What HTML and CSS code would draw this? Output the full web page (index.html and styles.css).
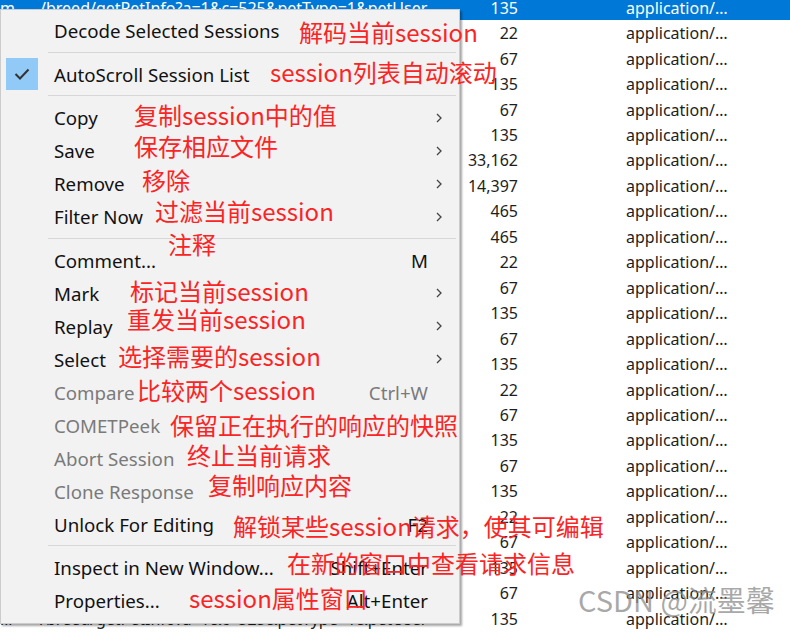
FILE: index.html
```html
<!DOCTYPE html>
<html lang="zh">
<head>
<meta charset="utf-8">
<title>Fiddler session menu</title>
<link rel="stylesheet" href="styles.css">
</head>
<body>
<div class="screen">
  <div class="list">
    <div class="row sel"><span class="host">m</span><span class="url">/breed/getPetInfo?a=1&amp;c=525&amp;petType=1&amp;petUser</span><span class="num">135</span><span></span><span class="type">application/…</span></div>
    <div class="row"><span></span><span></span><span class="num">22</span><span></span><span class="type">application/…</span></div>
    <div class="row"><span></span><span></span><span class="num">67</span><span></span><span class="type">application/…</span></div>
    <div class="row"><span></span><span></span><span class="num">135</span><span></span><span class="type">application/…</span></div>
    <div class="row"><span></span><span></span><span class="num">67</span><span></span><span class="type">application/…</span></div>
    <div class="row"><span></span><span></span><span class="num">135</span><span></span><span class="type">application/…</span></div>
    <div class="row"><span></span><span></span><span class="num">33,162</span><span></span><span class="type">application/…</span></div>
    <div class="row"><span></span><span></span><span class="num">14,397</span><span></span><span class="type">application/…</span></div>
    <div class="row"><span></span><span></span><span class="num">465</span><span></span><span class="type">application/…</span></div>
    <div class="row"><span></span><span></span><span class="num">465</span><span></span><span class="type">application/…</span></div>
    <div class="row"><span></span><span></span><span class="num">22</span><span></span><span class="type">application/…</span></div>
    <div class="row"><span></span><span></span><span class="num">67</span><span></span><span class="type">application/…</span></div>
    <div class="row"><span></span><span></span><span class="num">135</span><span></span><span class="type">application/…</span></div>
    <div class="row"><span></span><span></span><span class="num">67</span><span></span><span class="type">application/…</span></div>
    <div class="row"><span></span><span></span><span class="num">135</span><span></span><span class="type">application/…</span></div>
    <div class="row"><span></span><span></span><span class="num">22</span><span></span><span class="type">application/…</span></div>
    <div class="row"><span></span><span></span><span class="num">67</span><span></span><span class="type">application/…</span></div>
    <div class="row"><span></span><span></span><span class="num">135</span><span></span><span class="type">application/…</span></div>
    <div class="row"><span></span><span></span><span class="num">67</span><span></span><span class="type">application/…</span></div>
    <div class="row"><span></span><span></span><span class="num">135</span><span></span><span class="type">application/…</span></div>
    <div class="row"><span></span><span></span><span class="num">22</span><span></span><span class="type">application/…</span></div>
    <div class="row"><span></span><span></span><span class="num">67</span><span></span><span class="type">application/…</span></div>
    <div class="row"><span></span><span></span><span class="num">135</span><span></span><span class="type">application/…</span></div>
    <div class="row"><span></span><span></span><span class="num">67</span><span></span><span class="type">application/…</span></div>
    <div class="row"><span class="host">lll</span><span class="url">/breed/getPetInfo?a=1&amp;c=525&amp;petType=1&amp;petUser</span><span class="num">135</span><span></span><span class="type">application/…</span></div>
  </div>

  <div class="menu">
    <div class="item"><span class="gutter"></span><span class="label">Decode Selected Sessions</span><span class="key"></span><span class="sub"></span></div>
    <div class="sep"></div>
    <div class="item"><span class="gutter"><span class="check"><svg width="16" height="12" viewBox="0 0 16 12"><polyline points="1.5,6 6,10.5 14.5,1.5" fill="none" stroke="#333" stroke-width="2"/></svg></span></span><span class="label">AutoScroll Session List</span><span class="key"></span><span class="sub"></span></div>
    <div class="sep"></div>
    <div class="item"><span class="gutter"></span><span class="label">Copy</span><span class="key"></span><span class="sub"><svg class="arrow" width="6" height="10" viewBox="0 0 6 10"><polyline points="1,1 5,5 1,9" fill="none" stroke="#444" stroke-width="1.3"/></svg></span></div>
    <div class="item"><span class="gutter"></span><span class="label">Save</span><span class="key"></span><span class="sub"><svg class="arrow" width="6" height="10" viewBox="0 0 6 10"><polyline points="1,1 5,5 1,9" fill="none" stroke="#444" stroke-width="1.3"/></svg></span></div>
    <div class="item"><span class="gutter"></span><span class="label">Remove</span><span class="key"></span><span class="sub"><svg class="arrow" width="6" height="10" viewBox="0 0 6 10"><polyline points="1,1 5,5 1,9" fill="none" stroke="#444" stroke-width="1.3"/></svg></span></div>
    <div class="item"><span class="gutter"></span><span class="label">Filter Now</span><span class="key"></span><span class="sub"><svg class="arrow" width="6" height="10" viewBox="0 0 6 10"><polyline points="1,1 5,5 1,9" fill="none" stroke="#444" stroke-width="1.3"/></svg></span></div>
    <div class="sep"></div>
    <div class="item"><span class="gutter"></span><span class="label">Comment...</span><span class="key">M</span><span class="sub"></span></div>
    <div class="item"><span class="gutter"></span><span class="label">Mark</span><span class="key"></span><span class="sub"><svg class="arrow" width="6" height="10" viewBox="0 0 6 10"><polyline points="1,1 5,5 1,9" fill="none" stroke="#444" stroke-width="1.3"/></svg></span></div>
    <div class="item"><span class="gutter"></span><span class="label">Replay</span><span class="key"></span><span class="sub"><svg class="arrow" width="6" height="10" viewBox="0 0 6 10"><polyline points="1,1 5,5 1,9" fill="none" stroke="#444" stroke-width="1.3"/></svg></span></div>
    <div class="item"><span class="gutter"></span><span class="label">Select</span><span class="key"></span><span class="sub"><svg class="arrow" width="6" height="10" viewBox="0 0 6 10"><polyline points="1,1 5,5 1,9" fill="none" stroke="#444" stroke-width="1.3"/></svg></span></div>
    <div class="item disabled"><span class="gutter"></span><span class="label">Compare</span><span class="key">Ctrl+W</span><span class="sub"></span></div>
    <div class="item disabled"><span class="gutter"></span><span class="label">COMETPeek</span><span class="key"></span><span class="sub"></span></div>
    <div class="item disabled"><span class="gutter"></span><span class="label">Abort Session</span><span class="key"></span><span class="sub"></span></div>
    <div class="item disabled"><span class="gutter"></span><span class="label">Clone Response</span><span class="key"></span><span class="sub"></span></div>
    <div class="item"><span class="gutter"></span><span class="label">Unlock For Editing</span><span class="key">F2</span><span class="sub"></span></div>
    <div class="sep"></div>
    <div class="item"><span class="gutter"></span><span class="label">Inspect in New Window...</span><span class="key">Shift+Enter</span><span class="sub"></span></div>
    <div class="item"><span class="gutter"></span><span class="label">Properties...</span><span class="key">Alt+Enter</span><span class="sub"></span></div>
  </div>

  <div class="notes">
    <span class="note n1">解码当前session</span>
    <span class="note n2">session列表自动滚动</span>
    <span class="note n3">复制session中的值</span>
    <span class="note n4">保存相应文件</span>
    <span class="note n5">移除</span>
    <span class="note n6">过滤当前session</span>
    <span class="note n7">注释</span>
    <span class="note n8">标记当前session</span>
    <span class="note n9">重发当前session</span>
    <span class="note n10">选择需要的session</span>
    <span class="note n11">比较两个session</span>
    <span class="note n12">保留正在执行的响应的快照</span>
    <span class="note n13">终止当前请求</span>
    <span class="note n14">复制响应内容</span>
    <span class="note n15">解锁某些session请求，使其可编辑</span>
    <span class="note n16">在新的窗口中查看请求信息</span>
    <span class="note n17">session属性窗口</span>
  </div>

  <div class="watermark">CSDN @流墨馨</div>
</div>
</body>
</html>
```
FILE: styles.css
```css
html, body {
  margin: 0;
  padding: 0;
  background: #ffffff;
}

.screen {
  position: relative;
  width: 790px;
  height: 633px;
  overflow: hidden;
  background: #ffffff;
  font-family: "Noto Sans", "Open Sans", sans-serif;
}

/* background session list */
.list {
  display: flex;
  flex-direction: column;
  margin-top: -5px;
}

.row {
  display: grid;
  grid-template-columns: 40px 400px 78px 108px 1fr;
  height: 25.46px;
  align-items: center;
  font-size: 16px;
  color: #1e1e1e;
  white-space: nowrap;
}

.row > span {
  overflow: hidden;
}

.row.sel {
  background: #0078d7;
  color: #ffffff;
}

.num {
  text-align: right;
}

/* context menu */
.menu {
  position: absolute;
  left: 0;
  top: 9px;
  width: 458px;
  height: 609px;
  padding-top: 4px;
  box-sizing: content-box;
  background: #f2f2f2;
  border: 1px solid #cccccc;
  box-shadow: 2px 2px 2px rgba(0, 0, 0, 0.35);
  display: flex;
  flex-direction: column;
  font-size: 18.7px;
  color: #111111;
}

.item {
  display: grid;
  grid-template-columns: 53px 1fr auto 31px;
  height: 33px;
  align-items: center;
  white-space: nowrap;
}

.item.disabled {
  color: #7a7a7a;
}

.gutter {
  display: flex;
  align-items: center;
  padding-left: 5px;
}

.check {
  width: 32px;
  height: 32px;
  background: #91c9f7;
  display: flex;
  align-items: center;
  justify-content: center;
}

.key {
  text-align: right;
}

.sub {
  display: flex;
  align-items: center;
  padding-left: 8px;
}

.sep {
  height: 10.5px;
  display: flex;
  align-items: center;
  padding-left: 47px;
  padding-right: 3px;
}

.sep::before {
  content: "";
  flex: 1;
  height: 1px;
  background: #d7d7d7;
}

/* red annotations laid over the menu */
.notes {
  position: absolute;
  inset: 0;
  pointer-events: none;
}

.note {
  position: absolute;
  font-family: "Noto Sans CJK SC", "Noto Sans", sans-serif;
  font-size: 24px;
  line-height: 24px;
  color: #fb2424;
  white-space: nowrap;
}

.n1 { left: 299px; top: 20px; }
.n2 { left: 270px; top: 60px; }
.n3 { left: 134px; top: 103px; }
.n4 { left: 134px; top: 134px; }
.n5 { left: 142px; top: 168px; }
.n6 { left: 155px; top: 199px; }
.n7 { left: 168px; top: 232px; }
.n8 { left: 130px; top: 279px; }
.n9 { left: 127px; top: 307px; }
.n10 { left: 118px; top: 344px; }
.n11 { left: 137px; top: 378px; }
.n12 { left: 170px; top: 413px; }
.n13 { left: 187px; top: 443px; }
.n14 { left: 208px; top: 473px; }
.n15 { left: 233px; top: 514px; }
.n16 { left: 287px; top: 551px; }
.n17 { left: 189px; top: 586px; }

.watermark {
  position: absolute;
  left: 578px;
  top: 581px;
  font-family: "Noto Sans CJK SC", "Noto Sans", sans-serif;
  font-size: 29px;
  line-height: 36px;
  color: rgba(140, 140, 140, 0.75);
  white-space: nowrap;
}
```
